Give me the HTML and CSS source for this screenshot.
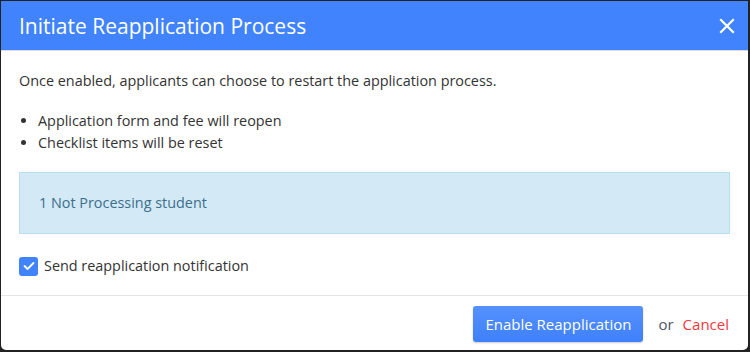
FILE: index.html
```html
<!DOCTYPE html>
<html lang="en">
<head>
  <meta charset="UTF-8" />
  <title>Initiate Reapplication Process</title>
  <link rel="stylesheet" href="styles.css">
</head>
<body>
  <div class="modal">
    <div class="modal-header">
      <h2>Initiate Reapplication Process</h2>
      <button class="close" aria-label="Close">
        <svg width="16" height="16" viewBox="0 0 16 16"><path d="M2 2L14 14M14 2L2 14" stroke="#fff" stroke-width="2.2" stroke-linecap="square"/></svg>
      </button>
    </div>

    <div class="modal-body">
      <p>Once enabled, applicants can choose to restart the application process.</p>
      <ul>
        <li>Application form and fee will reopen</li>
        <li>Checklist items will be reset</li>
      </ul>
      <div class="info">1 Not Processing student</div>
      <label class="check">
        <span class="box">
          <svg width="12" height="10" viewBox="0 0 12 10"><path d="M1.5 5L4.5 8L10.5 2" fill="none" stroke="#fff" stroke-width="1.8" stroke-linecap="round" stroke-linejoin="round"/></svg>
        </span>
        Send reapplication notification
      </label>
    </div>

    <div class="modal-footer">
      <button class="primary">Enable Reapplication</button>
      <span class="or">or</span>
      <a class="cancel" href="#">Cancel</a>
    </div>
  </div>
</body>
</html>
```

FILE: styles.css
```css
body {
  margin: 0;
  background: #222;
  padding: 1px 2px 2px 1px;
  font-family: "Open Sans", "Noto Sans", sans-serif;
  color: #333;
}
.modal {
  background: white;
  border-radius: 0 0 5px 5px;
  height: 349px;
  display: flex;
  flex-direction: column;
}
.modal-header {
  background: #4083fd;
  height: 49px;
  display: flex;
  align-items: center;
  justify-content: space-between;
  padding: 0 9px 0 18px;
  border-bottom: 1px solid #dcdcdc;
}
.modal-header h2 {
  margin: 0;
  font-size: 21px;
  font-weight: 400;
  color: white;
}
.close {
  background: none;
  border: none;
  padding: 0;
  width: 24px;
  height: 24px;
  display: flex;
  align-items: center;
  justify-content: center;
  cursor: pointer;
}
.modal-body {
  padding: 0 18px 19px;
  font-size: 14.4px;
  line-height: 20px;
  border-bottom: 1px solid #e5e5e5;
}
.modal-body p {
  margin: 20px 0 19px;
}
.modal-body ul {
  margin: 0 0 18px;
  padding-left: 19px;
  line-height: 22px;
}
.info {
  background: #d3e9f6;
  border: 1px solid #b9dfea;
  color: #3c6f8b;
  padding: 19px 19px;
  line-height: 22px;
}
.check {
  display: flex;
  align-items: center;
  gap: 6px;
  margin-top: 22px;
  height: 20px;
}
.box {
  width: 19px;
  height: 19px;
  background: #4083fd;
  border-radius: 3px;
  display: flex;
  align-items: center;
  justify-content: center;
}
.modal-footer {
  display: flex;
  align-items: center;
  justify-content: flex-end;
  padding: 10px 19px 0;
  font-size: 15px;
}
.primary {
  background: linear-gradient(#5590fd, #3f80fb);
  color: white;
  border: none;
  border-radius: 3px;
  height: 36px;
  width: 170px;
  font-family: inherit;
  font-size: 15px;
  box-shadow: 0 1px 2px rgba(0,0,0,0.2);
  cursor: pointer;
}
.or {
  color: #4d5566;
  margin: 0 9px 0 15px;
}
.cancel {
  color: #f0393e;
  text-decoration: none;
}
```
